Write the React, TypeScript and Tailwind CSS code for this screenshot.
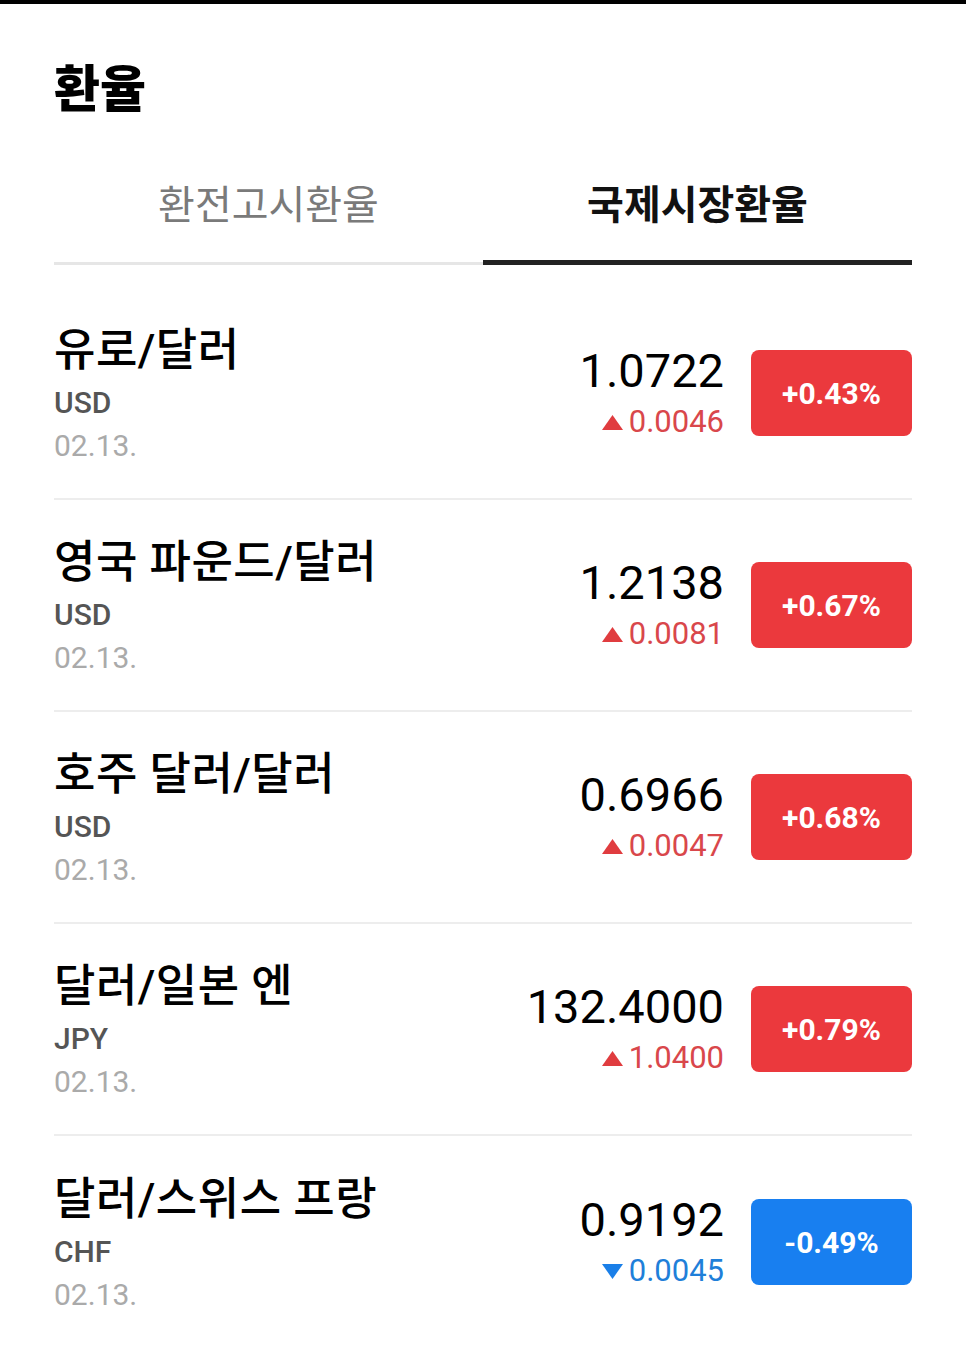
import React from 'react';

type Rate = {
  name: string;
  code: string;
  date: string;
  price: string;
  change: string;
  percent: string;
  up: boolean;
};

const rates: Rate[] = [
  { name: '유로/달러', code: 'USD', date: '02.13.', price: '1.0722', change: '0.0046', percent: '+0.43%', up: true },
  { name: '영국 파운드/달러', code: 'USD', date: '02.13.', price: '1.2138', change: '0.0081', percent: '+0.67%', up: true },
  { name: '호주 달러/달러', code: 'USD', date: '02.13.', price: '0.6966', change: '0.0047', percent: '+0.68%', up: true },
  { name: '달러/일본 엔', code: 'JPY', date: '02.13.', price: '132.4000', change: '1.0400', percent: '+0.79%', up: true },
  { name: '달러/스위스 프랑', code: 'CHF', date: '02.13.', price: '0.9192', change: '0.0045', percent: '-0.49%', up: false },
];

const Arrow = ({ up }: { up: boolean }) => (
  <svg width="21" height="15" viewBox="0 0 21 15" className="mr-[6px]">
    {up ? (
      <polygon points="10.5,0 21,15 0,15" fill="#e03c3f" />
    ) : (
      <polygon points="0,0 21,0 10.5,15" fill="#1a7fe8" />
    )}
  </svg>
);

const RateRow = ({ rate, last }: { rate: Rate; last: boolean }) => (
  <div
    className={`flex h-[212px] items-center justify-between ${
      last ? '' : 'border-b-2 border-[#ededed]'
    }`}
  >
    {/* left: name / code / date */}
    <div className="flex flex-col">
      <span className="text-[45px] font-medium leading-[61px] tracking-[0.5px] text-black">{rate.name}</span>
      <span className="text-[30px] font-medium leading-[43px] text-[#555]">{rate.code}</span>
      <span className="text-[30px] leading-[43px] text-[#aaa]">{rate.date}</span>
    </div>

    {/* right: price + badge */}
    <div className="flex items-center gap-[27px]">
      <div className="flex flex-col items-end">
        <span className="text-[47px] leading-[58px] text-black">{rate.price}</span>
        <span
          className={`flex items-center text-[31px] leading-[44px] ${
            rate.up ? 'text-[#d9474b]' : 'text-[#1f7fd9]'
          }`}
        >
          <Arrow up={rate.up} />
          {rate.change}
        </span>
      </div>
      <div
        className={`flex h-[86px] w-[161px] items-center justify-center rounded-[8px] text-[30px] font-bold text-white ${
          rate.up ? 'bg-[#eb393d]' : 'bg-[#187ff0]'
        }`}
      >
        {rate.percent}
      </div>
    </div>
  </div>
);

const App = () => {
  return (
    <div className="min-h-[1353px] bg-white font-['Roboto','Noto_Sans_CJK_KR',sans-serif]">
      <div className="h-[4px] bg-black" />
      <div className="px-[54px]">
        <h1 className="pt-[56px] text-[50px] font-black leading-[60px] text-black">환율</h1>

        {/* tabs */}
        <div className="mt-[30px] grid grid-cols-2">
          <div className="flex h-[115px] flex-col justify-between">
            <div className="flex flex-1 items-center justify-center text-[40px] text-[#7a7a7a]">
              환전고시환율
            </div>
            <div className="h-[3px] bg-[#e6e6e6]" />
          </div>
          <div className="flex h-[115px] flex-col justify-between">
            <div className="flex flex-1 items-center justify-center pt-[2px] text-[40px] font-bold text-[#111]">
              국제시장환율
            </div>
            <div className="h-[5px] bg-[#222]" />
          </div>
        </div>

        {/* list */}
        <div className="pt-[23px]">
          {rates.map((r, i) => (
            <RateRow key={r.name} rate={r} last={i === rates.length - 1} />
          ))}
        </div>
      </div>
    </div>
  );
};

export default App;
